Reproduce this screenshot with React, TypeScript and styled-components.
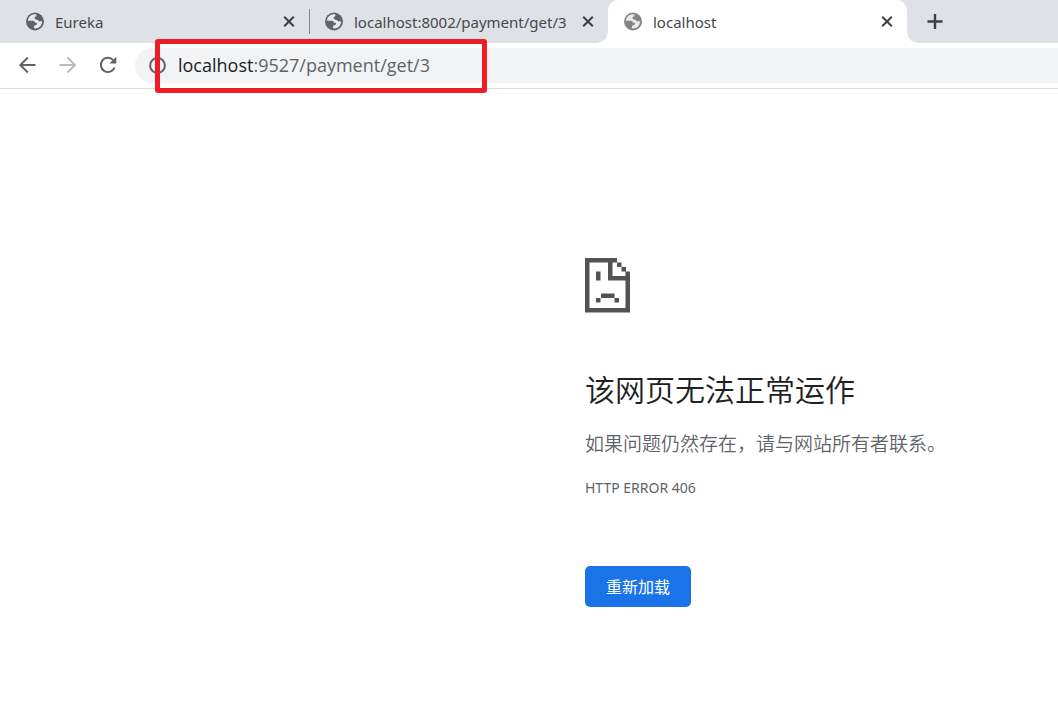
import React from "react";
import styled, { createGlobalStyle } from "styled-components";

const GlobalStyle = createGlobalStyle`
  * { box-sizing: border-box; }
  body {
    margin: 0;
    background: #fff;
    font-family: "Open Sans", "Noto Sans CJK SC", sans-serif;
  }
`;

const TabStrip = styled.div`
  display: flex;
  height: 43px;
  padding-left: 10px;
  background: #dee1e6;
  overflow: hidden;
`;

const Tab = styled.div<{ $active?: boolean; $divider?: boolean }>`
  position: relative;
  display: flex;
  align-items: center;
  flex: 0 1 299px;
  min-width: 0;
  padding: 0 10px 0 15px;
  color: #45494d;
  background: ${(p) => (p.$active ? "#fff" : "transparent")};
  border-radius: 10px 10px 0 0;

  &::after {
    content: "";
    display: ${(p) => (p.$divider ? "block" : "none")};
    position: absolute;
    right: -1px;
    top: 9px;
    width: 1px;
    height: 25px;
    background: #80868b;
  }
`;

const Flare = styled.span<{ $side: "left" | "right" }>`
  position: absolute;
  bottom: 0;
  ${(p) => p.$side}: -10px;
  width: 10px;
  height: 10px;
  background: radial-gradient(
    circle at ${(p) => (p.$side === "left" ? "0 0" : "100% 0")},
    transparent 9px,
    #fff 10px
  );
`;

const TabTitle = styled.span`
  flex: 1;
  min-width: 0;
  margin-left: 10px;
  font-family: "Noto Sans", sans-serif;
  font-size: 15px;
  line-height: 20px;
  white-space: nowrap;
  overflow: hidden;
`;

const IconButton = styled.button<{ $size: number; $muted?: boolean }>`
  display: flex;
  align-items: center;
  justify-content: center;
  flex: none;
  width: ${(p) => p.$size}px;
  height: ${(p) => p.$size}px;
  padding: 0;
  border: 0;
  background: none;
  color: ${(p) => (p.$muted ? "#babcbe" : "#5f6368")};
`;

const CloseButton = styled(IconButton)`
  color: #3c4043;
`;

const NewTabButton = styled(IconButton)`
  align-self: center;
  margin-left: 12px;
  color: #3c4043;
`;

const Toolbar = styled.div`
  display: flex;
  align-items: center;
  height: 46px;
  padding: 0 0 1px 8px;
  border-bottom: 1px solid #dadce0;
`;

const AddressBar = styled.div`
  position: relative;
  display: flex;
  align-items: center;
  flex: 1;
  height: 35px;
  margin-left: 7px;
  padding-left: 14px;
  background: #f1f3f4;
  border-radius: 18px 0 0 18px;
`;

const Address = styled.span`
  margin-left: 12px;
  font-size: 18px;
  line-height: 24px;
  color: #5f6368;
  white-space: nowrap;
`;

const Host = styled.span`
  color: #202124;
`;

const Highlight = styled.div`
  position: absolute;
  left: 20px;
  top: -9px;
  width: 332px;
  height: 54px;
  border: 5px solid #ee1c25;
  border-radius: 3px;
`;

const Page = styled.main`
  display: grid;
  grid-template-columns: 585fr 473fr;
  padding-top: 169px;
`;

const ErrorPanel = styled.section`
  grid-column: 2;
  display: flex;
  flex-direction: column;
  align-items: flex-start;
`;

const Heading = styled.h1`
  margin: 55px 0 0;
  font-size: 30px;
  font-weight: 350;
  line-height: 44px;
  color: #202124;
`;

const Summary = styled.p`
  margin: 18px 0 0;
  font-size: 19px;
  font-weight: 350;
  line-height: 28px;
  color: #5f6368;
`;

const ErrorCode = styled.p`
  margin: 20px 0 0;
  font-family: "Noto Sans", sans-serif;
  font-size: 14px;
  line-height: 20px;
  color: #5f6368;
`;

const ReloadButton = styled.button`
  height: 41px;
  margin-top: 68px;
  padding: 0 21px;
  border: 0;
  border-radius: 5px;
  background: #1a73e8;
  color: #fff;
  font-family: inherit;
  font-size: 16px;
  line-height: 24px;
`;

const Globe = ({ color = "#5f6368" }: { color?: string }) => (
  <svg width="20" height="20" viewBox="0 0 20 20" aria-hidden="true">
    <circle cx="10" cy="9.500" r="9" fill={color} />
    <path
      transform="translate(0 -0.500)"
      d="M11.4 2.9C7 2.2 3.3 5 2.9 9.2L7.6 9.2C9.2 9.2 9.9 10 9.9 11.2L11.8 11.2C12.3 12.9 11.4 13.9 9.7 13.9L9 14.2L9 16.8C13.5 17.6 17 14.3 17.1 10.2L16 9.5C15 10.2 13.8 10 13.4 9L12 8.2C10.4 8.2 9.3 7.2 9.5 6L11.4 4.4Z"
      fill="#e6e8eb"
    />
  </svg>
);

const CloseIcon = () => (
  <svg width="12" height="12" viewBox="0 0 12 12" stroke="currentColor" strokeWidth="2" aria-hidden="true">
    <path d="M1.200 0.700 10.800 10.300M10.800 0.700 1.200 10.300" />
  </svg>
);

const ArrowIcon = ({ forward = false }: { forward?: boolean }) => (
  <svg width="18" height="18" viewBox="0 0 18 18" fill="none" stroke="currentColor" strokeWidth="2" aria-hidden="true">
    {forward ? <path d="M0.500 9H15.500M8.500 1.500 16 9 8.500 16.500" /> : <path d="M16.500 9H2M8.800 1.500 1.300 9 8.800 16.500" />}
  </svg>
);

const ReloadIcon = () => (
  <svg width="18" height="18" viewBox="0 0 18 18" aria-hidden="true">
    <path d="M15.6 11.5A7.1 7.1 0 1 1 14.2 4.1" fill="none" stroke="currentColor" strokeWidth="2" />
    <path d="M17.3 0.8V7.6H10.4Z" fill="currentColor" />
  </svg>
);

const InfoIcon = () => (
  <svg width="17" height="17" viewBox="0 0 17 17" fill="none" stroke="#5f6368" strokeWidth="2" aria-hidden="true">
    <circle cx="8.5" cy="8.5" r="7.4" />
    <path d="M8.5 7.6V12.4M8.5 4.4V6.2" />
  </svg>
);

const SadPageIcon = () => (
  <svg width="46" height="55" viewBox="0 0 46 55" fill="#535353" role="img" aria-label="Error">
    <path d="M0 0H32V4.500H27.500V18H45V54.500H0ZM4.500 4.500V50H40.500V22.500H23V4.500Z" fillRule="evenodd" />
    <path d="M32 4.500H36.500V9H32ZM36.500 9H41V13.500H36.500ZM40.500 13.500H45V19H40.500ZM11 13.500H15.500V22.500H11ZM16 35.500H29.500V40H16ZM11 40H15.500V44.500H11ZM29.500 40H34V44.500H29.500Z" />
  </svg>
);

const tabs = [
  { title: "Eureka", divider: true },
  { title: "localhost:8002/payment/get/3" },
  { title: "localhost", active: true },
];

export default function App() {
  return (
    <>
      <GlobalStyle />
      <TabStrip>
        {tabs.map((tab) => (
          <Tab key={tab.title} $active={tab.active} $divider={tab.divider}>
            {tab.active && <Flare $side="left" />}
            <Globe color={tab.active ? "#858585" : undefined} />
            <TabTitle>{tab.title}</TabTitle>
            <CloseButton $size={20} aria-label={`Close ${tab.title}`}>
              <CloseIcon />
            </CloseButton>
            {tab.active && <Flare $side="right" />}
          </Tab>
        ))}
        <NewTabButton $size={32} aria-label="New tab">
          <svg width="16" height="16" viewBox="0 0 16 16" stroke="currentColor" strokeWidth="2.4" aria-hidden="true">
            <path d="M8 0V15M0.500 7.500H15.500" />
          </svg>
        </NewTabButton>
      </TabStrip>
      <Toolbar>
        <IconButton $size={40} aria-label="Back">
          <ArrowIcon />
        </IconButton>
        <IconButton $size={40} $muted aria-label="Forward">
          <ArrowIcon forward />
        </IconButton>
        <IconButton $size={40} aria-label="Reload">
          <ReloadIcon />
        </IconButton>
        <AddressBar>
          <InfoIcon />
          <Address>
            <Host>localhost</Host>:9527/payment/get/3
          </Address>
          <Highlight />
        </AddressBar>
      </Toolbar>
      <Page>
        <ErrorPanel>
          <SadPageIcon />
          <Heading>该网页无法正常运作</Heading>
          <Summary>如果问题仍然存在，请与网站所有者联系。</Summary>
          <ErrorCode>HTTP ERROR 406</ErrorCode>
          <ReloadButton>重新加载</ReloadButton>
        </ErrorPanel>
      </Page>
    </>
  );
}
